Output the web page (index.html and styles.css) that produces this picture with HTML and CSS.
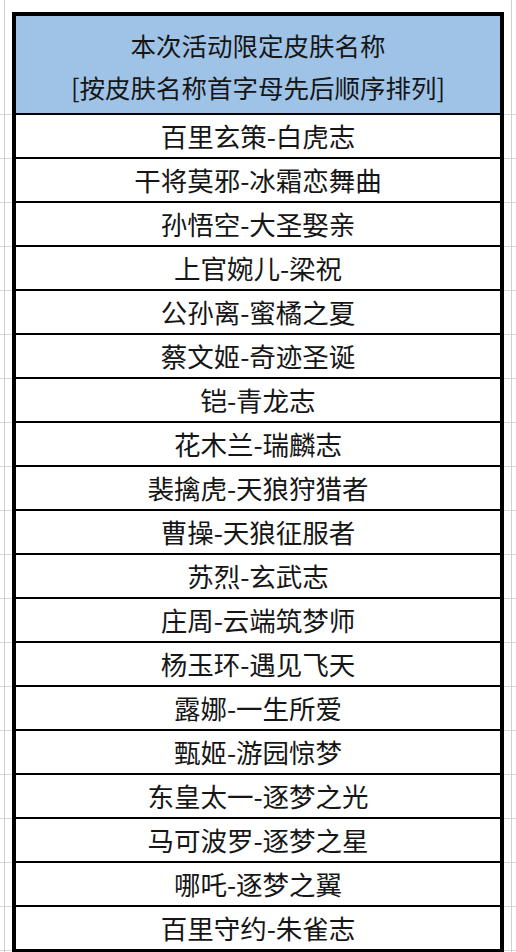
FILE: index.html
```html
<!DOCTYPE html>
<html lang="zh">
<head>
<meta charset="utf-8">
<title>本次活动限定皮肤名称</title>
<link rel="stylesheet" href="styles.css">
</head>
<body>
<div class="sheet">
  <div class="table">
    <div class="head">
      <div class="line">本次活动限定皮肤名称</div>
      <div class="line">[按皮肤名称首字母先后顺序排列]</div>
    </div>
    <div class="row">百里玄策-白虎志</div>
    <div class="row">干将莫邪-冰霜恋舞曲</div>
    <div class="row">孙悟空-大圣娶亲</div>
    <div class="row">上官婉儿-梁祝</div>
    <div class="row">公孙离-蜜橘之夏</div>
    <div class="row">蔡文姬-奇迹圣诞</div>
    <div class="row">铠-青龙志</div>
    <div class="row">花木兰-瑞麟志</div>
    <div class="row">裴擒虎-天狼狩猎者</div>
    <div class="row">曹操-天狼征服者</div>
    <div class="row">苏烈-玄武志</div>
    <div class="row">庄周-云端筑梦师</div>
    <div class="row">杨玉环-遇见飞天</div>
    <div class="row">露娜-一生所爱</div>
    <div class="row">甄姬-游园惊梦</div>
    <div class="row">东皇太一-逐梦之光</div>
    <div class="row">马可波罗-逐梦之星</div>
    <div class="row">哪吒-逐梦之翼</div>
    <div class="row">百里守约-朱雀志</div>
  </div>
</div>
</body>
</html>
```
FILE: styles.css
```css
html, body {
  margin: 0;
  padding: 0;
  overflow: hidden;
}
body {
  width: 516px;
  height: 952px;
  background:
    linear-gradient(#cfcfcf, #cfcfcf) 4px 0 / 1px 100% no-repeat,
    linear-gradient(#cfcfcf, #cfcfcf) 511px 0 / 1px 100% no-repeat,
    repeating-linear-gradient(to bottom, #d8d8d8 0 1px, transparent 1px 44px) 0 114px / 100% 100% no-repeat,
    #ffffff;
  font-family: "Noto Sans CJK SC", "Noto Sans", sans-serif;
  color: #161616;
}
.sheet {
  padding: 12px 12px 0 12px;
}
.table {
  width: 484px;
  border: 4px solid #000;
  background: #fff;
}
.head {
  height: 97px;
  box-sizing: border-box;
  padding-top: 8px;
  background: #9fc3e7;
  text-align: center;
}
.head .line {
  font-size: 25.5px;
  line-height: 42px;
  height: 42px;
}
.row {
  height: 42px;
  border-top: 2px solid #000;
  display: flex;
  align-items: center;
  justify-content: center;
  font-size: 26.5px;
  line-height: 42px;
}
```
